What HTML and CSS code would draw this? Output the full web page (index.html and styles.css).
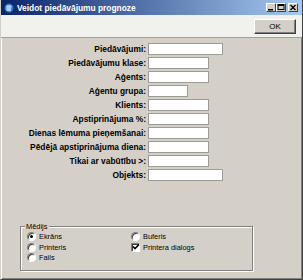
FILE: index.html
```html
<!DOCTYPE html>
<html>
<head>
<meta charset="utf-8">
<link rel="stylesheet" href="styles.css">
</head>
<body>
<div class="window">
  <div class="titlebar">
    <svg class="appicon" width="10" height="10" viewBox="0 0 10 10">
      <circle cx="5" cy="5" r="4.5" fill="#3a7fd0"/>
      <path d="M2 3 Q5 1 8 3 Q6 5 7 8 Q4 9 2 7 Q3 5 2 3Z" fill="#9fd0f5"/>
      <circle cx="5" cy="5" r="4.5" fill="none" stroke="#1a3f8a" stroke-width="0.7"/>
    </svg>
    <span class="title">Veidot piedāvājumu prognoze</span>
    <div class="tbtns">
      <span class="tbtn"><svg width="10" height="9" viewBox="0 0 10 9"><rect x="2" y="6" width="5" height="1.5" fill="#000"/></svg></span>
      <span class="tbtn"><svg width="10" height="9" viewBox="0 0 10 9"><rect x="2" y="1.5" width="6" height="5" fill="none" stroke="#000" stroke-width="1"/><rect x="2" y="1.5" width="6" height="1.5" fill="#000"/></svg></span>
      <span class="tbtn close"><svg width="10" height="9" viewBox="0 0 10 9"><path d="M2.5 2 L7.5 7 M7.5 2 L2.5 7" stroke="#000" stroke-width="1.4"/></svg></span>
    </div>
  </div>
  <div class="toolbar">
    <button class="ok">OK</button>
  </div>
  <div class="content">
    <div class="form">
      <span class="lbl">Piedāvājumi:</span><span class="field w75"></span>
      <span class="lbl">Piedāvājumu klase:</span><span class="field w61"></span>
      <span class="lbl">Aģents:</span><span class="field w61"></span>
      <span class="lbl">Aģentu grupa:</span><span class="field w40"></span>
      <span class="lbl">Klients:</span><span class="field w61"></span>
      <span class="lbl">Apstiprinājuma %:</span><span class="field w61"></span>
      <span class="lbl">Dienas lēmuma pieņemšanai:</span><span class="field w61"></span>
      <span class="lbl">Pēdējā apstiprinājuma diena:</span><span class="field w61"></span>
      <span class="lbl">Tikai ar vabūtību &gt;:</span><span class="field w61"></span>
      <span class="lbl">Objekts:</span><span class="field w75"></span>
    </div>
    <div class="group">
      <span class="legend">Mēdijs</span>
      <div class="opts">
        <div class="opt"><span class="radio on"></span>Ekrāns</div>
        <div class="opt"><span class="radio"></span>Buferis</div>
        <div class="opt"><span class="radio"></span>Printeris</div>
        <div class="opt"><span class="check"><svg width="8" height="8" viewBox="0 0 8 8"><path d="M1 3.5 L3 5.5 L7 1.5" fill="none" stroke="#000" stroke-width="1.6"/></svg></span>Printera dialogs</div>
        <div class="opt"><span class="radio"></span>Fails</div>
      </div>
    </div>
  </div>
</div>
</body>
</html>
```

FILE: styles.css
```css
* { box-sizing: border-box; }
html, body { margin: 0; padding: 0; }
body {
  width: 303px;
  height: 280px;
  overflow: hidden;
  background: #d4d0c8;
  font-family: "Liberation Sans", Arial, sans-serif;
}
.window {
  width: 303px;
  height: 280px;
  background: #d4d0c8;
  display: flex;
  flex-direction: column;
  border-left: 1px solid #d4d0c8;
  border-right: 1px solid #404040;
  border-bottom: 1px solid #404040;
  box-shadow: inset 1px 0 #fff, inset -1px -1px #808080;
}
.titlebar {
  height: 15px;
  display: flex;
  align-items: center;
  background: linear-gradient(to right, #0a246a, #a6caf0);
  padding-left: 3px;
  padding-right: 4px;
}
.appicon { flex: none; }
.title {
  margin-left: 3px;
  color: #fff;
  font-weight: bold;
  font-size: 8.4px;
  white-space: nowrap;
  flex: 1;
}
.tbtns {
  display: flex;
  gap: 0;
}
.tbtn {
  width: 10px;
  height: 9px;
  background: #d4d0c8;
  border: 1px solid;
  border-color: #fff #404040 #404040 #fff;
  display: flex;
  align-items: center;
  justify-content: center;
  overflow: hidden;
}
.tbtn svg { flex: none; }
.tbtn.close { margin-left: 2px; }
.toolbar {
  height: 23px;
  background: #f1f1ee;
  border-bottom: 1px solid #a0a0a0;
  display: flex;
  justify-content: flex-end;
  align-items: flex-start;
  padding: 4px 6px 0 0;
}
.ok {
  width: 42px;
  height: 15px;
  padding: 0;
  margin: 0;
  font-family: "Liberation Sans", Arial, sans-serif;
  font-size: 8px;
  color: #000;
  background: #d4d0c8;
  border: 1px solid;
  border-color: #fff #404040 #404040 #fff;
  box-shadow: inset -1px -1px #808080;
}
.content {
  flex: 1;
  display: flex;
  flex-direction: column;
  padding-top: 4px;
}
.form {
  display: grid;
  grid-template-columns: 145px auto;
  column-gap: 2px;
  grid-auto-rows: 14px;
  align-items: center;
}
.lbl {
  text-align: right;
  font-weight: bold;
  font-size: 8.4px;
  white-space: nowrap;
  color: #000;
}
.field {
  height: 12px;
  background: #fff;
  border: 1px solid #9d9b95;
}
.w75 { width: 75px; }
.w61 { width: 61px; }
.w40 { width: 40px; }
.group {
  position: relative;
  margin: 44px 0 0 19px;
  width: 233px;
  height: 45px;
  border: 1px solid #808080;
  box-shadow: inset 1px 1px #fff, 1px 1px #fff;
  padding: 4px 0 0 6px;
}
.legend {
  position: absolute;
  left: 4px;
  top: -5px;
  background: #d4d0c8;
  padding: 0 2px 0 1px;
  font-size: 7.4px;
  line-height: 9px;
  color: #000;
}
.opts {
  display: grid;
  grid-template-columns: 104px auto;
  grid-auto-rows: 10.7px;
  font-size: 7.4px;
  color: #000;
}
.opt {
  display: flex;
  align-items: center;
  gap: 3px;
  white-space: nowrap;
}
.radio {
  position: relative;
  width: 9px;
  height: 9px;
  border-radius: 50%;
  background: #fff;
  border: 1px solid;
  border-color: #808080 #fff #fff #808080;
  box-shadow: inset 1px 1px #404040;
  flex: none;
}
.radio.on::after {
  content: "";
  position: absolute;
  left: 2px;
  top: 2px;
  width: 3px;
  height: 3px;
  border-radius: 50%;
  background: #000;
}
.check {
  width: 9px;
  height: 9px;
  background: #fff;
  border: 1px solid;
  border-color: #808080 #fff #fff #808080;
  box-shadow: inset 1px 1px #404040;
  display: flex;
  align-items: center;
  justify-content: center;
  flex: none;
}
.check svg { flex: none; }
```
